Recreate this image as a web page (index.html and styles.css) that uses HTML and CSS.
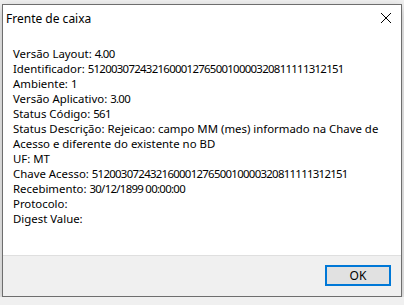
FILE: index.html
```html
<!DOCTYPE html>
<html lang="pt-BR">
	<head>
		<meta charset="UTF-8">
		<meta name="viewport" content="width=device-width, initial-scale=1.0">
		<title>Frente de caixa</title>
		<link rel="stylesheet" href="styles.css">
	</head>
	<body>
		<!-- janela de diálogo -->
		<div class="dialog">
			<div class="titlebar">
				<span class="title">Frente de caixa</span>
				<span class="close">
					<svg width="12" height="12" viewBox="0 0 12 12">
						<path d="M1 1 L11 11 M11 1 L1 11" stroke="#000" stroke-width="1" fill="none" />
					</svg>
				</span>
			</div>

			<div class="content">
				<div class="line">Versão Layout: <span class="num">4.00</span></div>
				<div class="line">Identificador: <span class="num">51200307243216000127650010000320811111312151</span></div>
				<div class="line">Ambiente: <span class="num">1</span></div>
				<div class="line">Versão Aplicativo: <span class="num">3.00</span></div>
				<div class="line">Status Código: <span class="num">561</span></div>
				<div class="line">Status Descrição: Rejeicao: campo MM (mes) informado na Chave de<br>Acesso e diferente do existente no BD</div>
				<div class="line">UF: MT</div>
				<div class="line">Chave Acesso: <span class="num">51200307243216000127650010000320811111312151</span></div>
				<div class="line">Recebimento: <span class="num">30/12/1899 00:00:00</span></div>
				<div class="line">Protocolo:</div>
				<div class="line">Digest Value:</div>
			</div>

			<div class="footer">
				<button class="btn">OK</button>
			</div>
		</div>
	</body>
</html>
```

FILE: styles.css
```css
* {
	margin: 0;
	padding: 0;
	box-sizing: border-box;
}

html {
	height: 100%;
	background: #f0f0f0;
}

body {
	padding: 4px 0 0 2px;
	font-family: "Noto Sans", "Liberation Sans", sans-serif;
	font-size: 11.4px;
	color: #000;
}

/* janela */
.dialog {
	width: 400px;
	height: 293px;
	border: 1px solid #6e6e6e;
	background: #fff;
	display: flex;
	flex-direction: column;
	box-shadow: 0 4px 10px rgba(0, 0, 0, .25);
}

.titlebar {
	height: 30px;
	display: flex;
	align-items: center;
	justify-content: space-between;
	padding: 0 9px 4px 3px;
}

.title {
	font-size: 12px;
}

.close {
	display: flex;
	width: 12px;
	height: 12px;
}

/* texto */
.content {
	flex: 1;
	padding: 11px 0 0 10px;
	line-height: 15px;
}

.line {
	white-space: nowrap;
}

/* dígitos mais estreitos, como no Segoe UI */
.num {
	letter-spacing: -.7px;
}

/* rodapé */
.footer {
	height: 41px;
	background: #f0f0f0;
	border-top: 1px solid #dfdfdf;
	display: flex;
	justify-content: flex-end;
	padding: 9px 10px 0 0;
}

.btn {
	width: 66px;
	height: 21px;
	background: #e1e1e1;
	border: 2px solid #0078d7;
	font-family: inherit;
	font-size: 12px;
	color: #000;
}
```
